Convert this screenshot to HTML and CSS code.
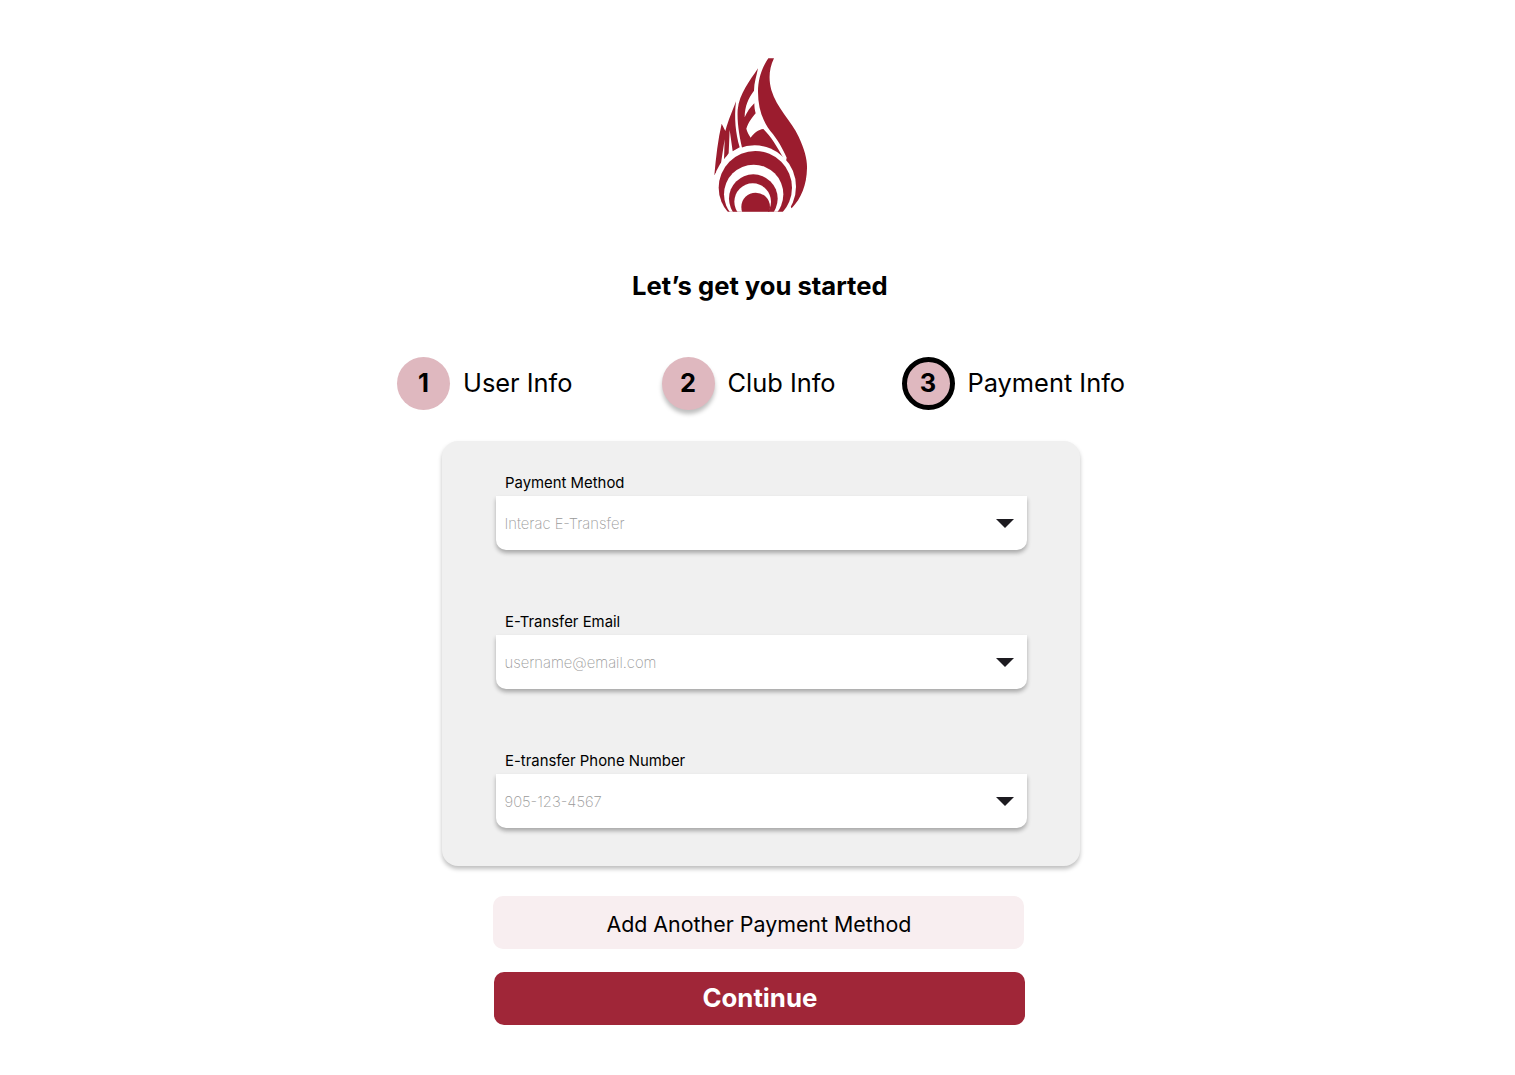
FILE: index.html
```html
<!DOCTYPE html>
<html lang="en">
<head>
<meta charset="utf-8">
<title>Payment Info</title>
<link rel="stylesheet" href="styles.css">
</head>
<body>
<main class="page">
  <svg class="logo" viewBox="0 0 360 510" role="img" aria-label="Flame logo">
    <clipPath id="base"><rect width="360" height="485"/></clipPath>
    <g clip-path="url(#base)">
      <g class="red">
        <path d="M205 25H222C206 58 206 90 214 120C230 175 274 212 296 260C314 298 322 330 321 355C320 405 304 445 275 475L240 420L260 323C248 296 234 270 211 243C187 212 174 172 174 125C174 85 187 52 205 25Z"/>
        <path d="M174 55C150 92 118 130 113 180C111 220 118 260 130 310L249 322C230 288 213 260 190 237C175 238 162 250 152 263C146 254 142 246 139 236C146 216 155 205 167 190C164 180 163 170 163 160C150 172 141 186 134 202C134 168 146 143 162 122C162 98 170 78 174 55Z"/>
        <path d="M108 154C98 182 86 206 76 243L65 221C54 268 48 320 43 376L62 346L74 268L72 330L86 310L89 240L98 304L119 292C107 250 102 205 108 154Z"/>
      </g>
      <circle class="white" cx="164" cy="410" r="124"/>
      <circle class="red" cx="166" cy="413" r="110"/>
      <circle class="white" cx="161" cy="433" r="89"/>
      <circle class="red" cx="160" cy="446" r="73"/>
      <circle class="white" cx="158" cy="455" r="55"/>
      <circle class="red" cx="167" cy="471" r="43"/>
    </g>
  </svg>

  <h1 class="title">Let’s get you started</h1>

  <ol class="steps">
    <li class="step"><span class="badge">1</span><span class="name">User Info</span></li>
    <li class="step"><span class="badge raised">2</span><span class="name">Club Info</span></li>
    <li class="step"><span class="badge current">3</span><span class="name">Payment Info</span></li>
  </ol>

  <section class="card">
    <div class="field">
      <span class="label">Payment Method</span>
      <div class="select"><span>Interac E-Transfer</span><svg class="caret" viewBox="0 0 18 9"><path d="M0 0H18L9 9Z"/></svg></div>
    </div>
    <div class="field">
      <span class="label">E-Transfer Email</span>
      <div class="select"><span>username@email.com</span><svg class="caret" viewBox="0 0 18 9"><path d="M0 0H18L9 9Z"/></svg></div>
    </div>
    <div class="field">
      <span class="label">E-transfer Phone Number</span>
      <div class="select"><span>905-123-4567</span><svg class="caret" viewBox="0 0 18 9"><path d="M0 0H18L9 9Z"/></svg></div>
    </div>
  </section>

  <button class="button secondary">Add Another Payment Method</button>
  <button class="button primary">Continue</button>
</main>
</body>
</html>
```
FILE: styles.css
```css
* { box-sizing: border-box; }

body {
  margin: 0;
  background: #fff;
  color: #000;
  font-family: Inter, "Liberation Sans", sans-serif;
}

.page {
  display: flex;
  flex-direction: column;
  width: 1515px;
  height: 1075px;
  padding: 50px 0 0 397px;
  overflow: hidden;
}

.logo { width: 120px; height: 170px; margin-left: 303px; flex: none; }
.red { fill: #9b1c2e; }
.white { fill: #fff; }

.title {
  width: 256px;
  margin: 46px 0 0 235px;
  font-size: 25.6px;
  line-height: 40px;
  font-weight: 700;
  white-space: nowrap;
}

.steps {
  display: grid;
  grid-template-columns: 264.5px 240px auto;
  margin: 51px 0 0;
  padding: 0;
  list-style: none;
}

.step {
  display: flex;
  align-items: center;
  gap: 13px;
  font-size: 25.4px;
  line-height: 30px;
  white-space: nowrap;
}

.name { padding-bottom: 1px; }

.badge {
  display: flex;
  align-items: center;
  justify-content: center;
  width: 53px;
  height: 53px;
  padding-bottom: 1px;
  border-radius: 50%;
  background: #dfb8bf;
  font-weight: 700;
}

.raised { box-shadow: 0 4px 4px rgba(0, 0, 0, 0.25); }
.current { border: 5.5px solid #000; }

.card {
  display: flex;
  flex-direction: column;
  gap: 57px;
  width: 638px;
  height: 425px;
  margin: 31px 0 0 45px;
  padding: 28px 53.5px 0;
  border-radius: 16px;
  background: #f0f0f0;
  box-shadow: 0 3px 4px rgba(0, 0, 0, 0.25);
}

.field { height: 82px; }

.label {
  display: block;
  height: 27.3px;
  padding-left: 9.5px;
  font-size: 14.9px;
  line-height: 28px;
}

.select {
  display: flex;
  align-items: center;
  justify-content: space-between;
  height: 53.5px;
  padding: 1px 12.5px 0 9px;
  border-radius: 0 0 10px 10px;
  background: #fff;
  box-shadow: 0 3px 4px rgba(0, 0, 0, 0.3);
  color: #999;
  font-size: 14.8px;
  font-weight: 200;
}

.caret { width: 18px; height: 9px; fill: #1d1b20; }

.button {
  width: 531px;
  height: 53px;
  padding: 0;
  border: 0;
  border-radius: 10px;
  font-family: inherit;
}

.secondary {
  margin: 30px 0 0 96.4px;
  padding-top: 2px;
  background: #f8eef0;
  color: #000;
  font-size: 21.4px;
}

.primary {
  margin: 23px 0 0 97.4px;
  padding-bottom: 3px;
  background: #a02638;
  color: #fff;
  font-size: 25.8px;
  font-weight: 700;
}
```
